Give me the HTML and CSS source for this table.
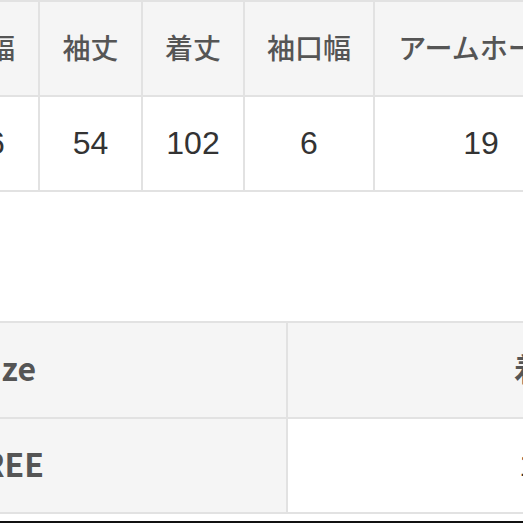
FILE: index.html
```html
<!DOCTYPE html>
<html lang="ja">
<head>
<meta charset="utf-8">
<link rel="stylesheet" href="styles.css">
</head>
<body>
<div class="page">
  <div class="grid grid-top">
    <div class="cell head">身幅</div>
    <div class="cell head">袖丈</div>
    <div class="cell head">着丈</div>
    <div class="cell head">袖口幅</div>
    <div class="cell head">アームホール</div>
    <div class="cell num">56</div>
    <div class="cell num">54</div>
    <div class="cell num">102</div>
    <div class="cell num">6</div>
    <div class="cell num">19</div>
  </div>
  <div class="grid grid-bottom">
    <div class="cell head2">Size</div>
    <div class="cell head2">着丈</div>
    <div class="cell head2">FREE</div>
    <div class="cell num white">102</div>
  </div>
  <div class="bar"></div>
</div>
</body>
</html>
```
FILE: styles.css
```css
html, body {
  margin: 0;
  padding: 0;
  width: 523px;
  height: 523px;
  overflow: hidden;
  background: #fff;
}
.page {
  display: flex;
  flex-direction: column;
  align-items: flex-start;
}
.grid {
  display: grid;
  gap: 2px;
  padding: 2px;
  background: #e2e2e2;
}
.grid-top {
  margin-left: -66px;
  grid-template-columns: 102px 101px 100px 128px 212px;
  grid-template-rows: 93px 93px;
}
.grid-bottom {
  margin-top: 129px;
  margin-left: -280px;
  grid-template-columns: 564px 516px;
  grid-template-rows: 94px 93px;
}
.cell {
  display: flex;
  align-items: center;
  justify-content: center;
  white-space: nowrap;
}
.head {
  background: #f5f5f5;
  color: #555;
  font-family: "Noto Sans CJK JP", "Noto Sans", sans-serif;
  font-weight: 500;
  font-size: 28px;
  padding-bottom: 4px;
}
.num {
  background: #fff;
  color: #333;
  font-family: "Liberation Sans", Arial, sans-serif;
  font-size: 32px;
}
.head2 {
  background: #f5f5f5;
  color: #555;
  font-family: "Noto Sans CJK JP", "Noto Sans", sans-serif;
  font-weight: 700;
  font-size: 32px;
  padding-bottom: 6px;
}
.white {
  background: #fff;
}
.bar {
  margin-top: 7px;
  width: 523px;
  height: 3px;
  background: #111;
}
```
